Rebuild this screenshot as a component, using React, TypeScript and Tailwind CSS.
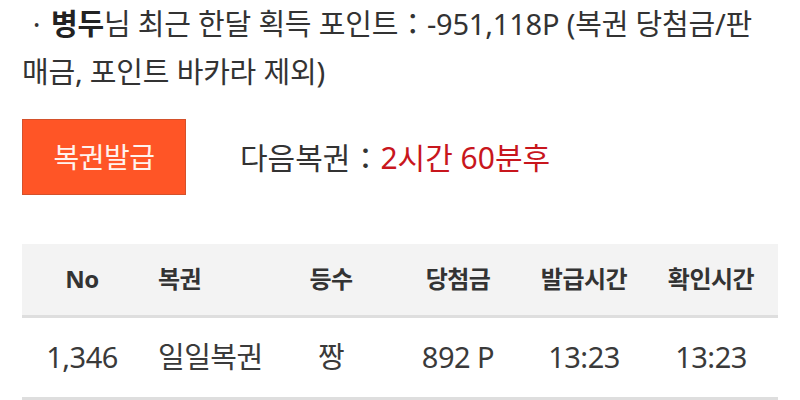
const columns = [
  { key: "no", label: "No", width: "w-[120px]", align: "text-center" },
  { key: "name", label: "복권", width: "w-[128px]", align: "text-left pl-4" },
  { key: "rank", label: "등수", width: "w-[122px]", align: "text-center" },
  { key: "prize", label: "당첨금", width: "w-[132px]", align: "text-center" },
  { key: "issued", label: "발급시간", width: "w-[120px]", align: "text-center" },
  { key: "checked", label: "확인시간", width: "w-[134px]", align: "text-center" },
];

const rows = [
  { no: "1,346", name: "일일복권", rank: "짱", prize: "892 P", issued: "13:23", checked: "13:23" },
];

export default function App() {
  return (
    <div className="w-[800px] h-[400px] overflow-hidden bg-white text-[#333] font-['Noto_Sans','Noto_Sans_CJK_KR',sans-serif]">
      <p className="pl-[22px] pr-[32px] text-[29px] leading-[48px] tracking-[-0.2px]">
        <span className="inline-block w-[29px] text-center">·</span>
        <b className="font-bold text-[#222]">병두</b>
        <span>님 최근 한달 획득 포인트：-951,118P (복권 당첨금/판</span>
        <br />
        <span>매금, 포인트 바카라 제외)</span>
      </p>

      <div className="mt-[23px] flex items-center px-[22px]">
        <button className="h-[76px] w-[164px] border border-[#d4512b] bg-[#ff5526] text-[28px] tracking-[-0.5px] text-[#fff3ee]">
          복권발급
        </button>
        <div className="ml-[54px] text-[30px]">
          다음복권：<span className="text-[#c8161d]">2시간 60분후</span>
        </div>
      </div>

      <table className="mx-[22px] mt-[49px] w-[756px] table-fixed border-collapse">
        <thead>
          <tr className="h-[72px] bg-[#f3f3f3] border-b-[3px] border-[#dedede]">
            {columns.map((c) => (
              <th key={c.key} className={`${c.width} ${c.align} text-[24px] font-bold tracking-[-0.5px] text-[#333]`}>
                {c.label}
              </th>
            ))}
          </tr>
        </thead>
        <tbody>
          {rows.map((r) => (
            <tr key={r.no} className="h-[82px] border-b-[3px] border-[#dedede]">
              {columns.map((c) => (
                <td key={c.key} className={`${c.align} text-[29px] tracking-[-0.5px] text-[#3a3a3a]`}>
                  {r[c.key as keyof typeof r]}
                </td>
              ))}
            </tr>
          ))}
        </tbody>
      </table>
    </div>
  );
}
